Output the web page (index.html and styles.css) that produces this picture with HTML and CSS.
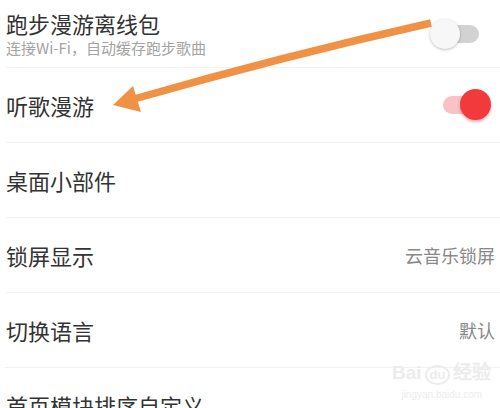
FILE: index.html
```html
<!DOCTYPE html>
<html lang="zh-CN">
<head>
    <meta charset="UTF-8">
    <meta name="viewport" content="width=device-width, initial-scale=1.0">
    <title>设置</title>
    <link rel="stylesheet" href="styles.css">
</head>
<body>
    <div class="settings">
        <div class="row row-first">
            <div class="label">
                <div class="title">跑步漫游离线包</div>
                <div class="subtitle">连接Wi-Fi，自动缓存跑步歌曲</div>
            </div>
            <div class="switch">
                <span class="track"></span>
                <span class="knob"></span>
            </div>
        </div>
        <div class="row">
            <div class="title">听歌漫游</div>
            <div class="switch on">
                <span class="track"></span>
                <span class="knob"></span>
            </div>
        </div>
        <div class="row">
            <div class="title">桌面小部件</div>
        </div>
        <div class="row">
            <div class="title">锁屏显示</div>
            <div class="value">云音乐锁屏</div>
        </div>
        <div class="row">
            <div class="title">切换语言</div>
            <div class="value">默认</div>
        </div>
        <div class="row">
            <div class="title">首页模块排序自定义</div>
        </div>
    </div>

    <!-- annotation arrow drawn over the screenshot -->
    <svg class="arrow" width="500" height="408" viewBox="0 0 500 408">
        <path d="M431 23 Q284 56 134 99" fill="none" stroke="#f09245" stroke-width="7.5"/>
        <polygon points="113,105 133,86 141,112" fill="#f09245"/>
    </svg>

    <div class="watermark">
        <div class="wm-logo">Bai<span class="wm-du">du</span>经验</div>
        <div class="wm-url">jingyan.baidu.com</div>
    </div>
</body>
</html>
```

FILE: styles.css
```css
body {
    margin: 0;
    background: #fff;
    width: 500px;
    height: 408px;
    overflow: hidden;
    position: relative;
    font-family: "Noto Sans CJK SC", "Noto Sans", sans-serif;
}

.settings {
    margin-left: 5px;
}

.row {
    height: 74px;
    display: flex;
    align-items: center;
    justify-content: space-between;
    border-bottom: 1px solid #f1f1f1;
    padding: 0 5px 0 1px;
}

.row-first {
    height: 67px;
}

.title {
    font-size: 22px;
    line-height: 26px;
    color: #333;
}

.subtitle {
    margin-top: 2px;
    font-size: 15px;
    line-height: 20px;
    color: #a3a3a3;
}

.value {
    font-size: 18px;
    color: #888;
}

/* SWITCH */
.switch {
    position: relative;
    width: 60px;
    height: 30px;
    margin-right: 5px;
    display: flex;
    align-items: center;
}

.track {
    display: block;
    margin-left: 13px;
    width: 36px;
    height: 18px;
    border-radius: 9px;
    background: #d2d2d2;
}

.knob {
    position: absolute;
    top: 0;
    left: 0;
    width: 30px;
    height: 30px;
    border-radius: 50%;
    background: #f7f7f7;
    box-shadow: 0 1px 3px rgba(0,0,0,0.25);
}

.switch.on .track {
    background: #f9c2c5;
}

.switch.on .knob {
    left: 30px;
    top: -1px;
    width: 31px;
    height: 31px;
    background: #f23a3c;
    box-shadow: 0 2px 3px rgba(150,0,0,0.3);
}

/* OVERLAYS */
.arrow {
    position: absolute;
    top: 0;
    left: 0;
    pointer-events: none;
}

.watermark {
    position: absolute;
    left: 392px;
    top: 362px;
    color: #ececec;
    font-family: "Liberation Sans", sans-serif;
    text-align: center;
}

.wm-logo {
    font-size: 19px;
    font-weight: bold;
    line-height: 22px;
}

.wm-du {
    display: inline-block;
    font-size: 13px;
    border: 2px solid #ececec;
    border-radius: 50%;
    padding: 0 3px;
    margin: 0 3px;
    line-height: 16px;
}

.wm-url {
    font-size: 10px;
    margin-top: 4px;
}
```
